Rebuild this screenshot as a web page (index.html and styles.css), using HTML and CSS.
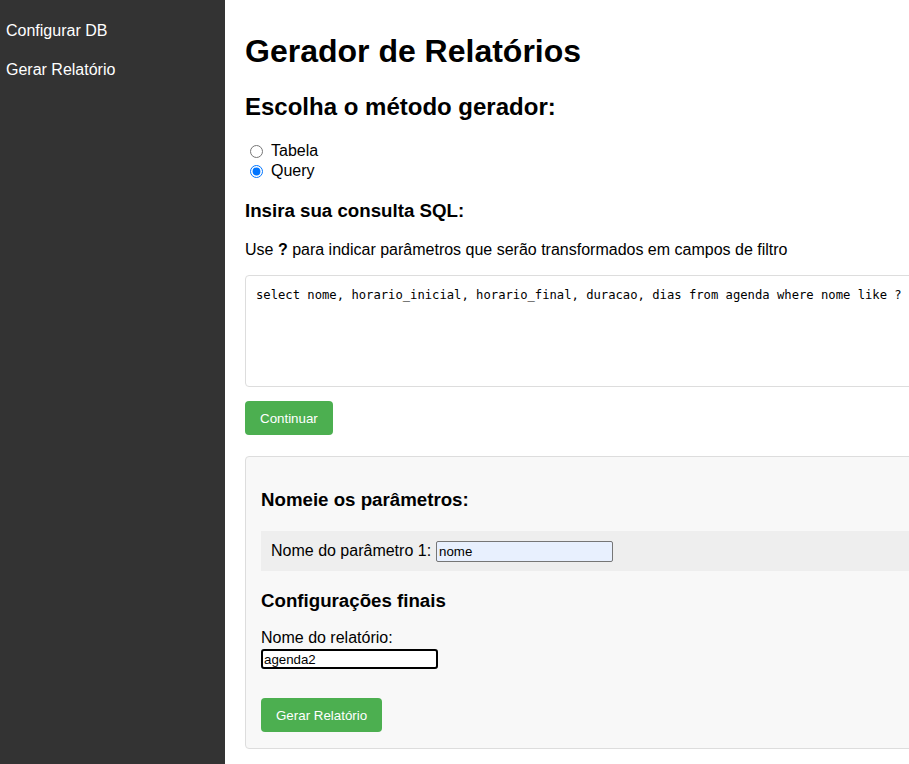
FILE: index.html
```html
<!DOCTYPE html>
<html lang="pt">
<head>
<meta charset="utf-8">
<title>Gerador de Relatórios</title>
<link rel="stylesheet" href="styles.css">
</head>
<body>
<div class="layout">
  <nav class="sidebar">
    <a class="nav-link" href="#">Configurar DB</a>
    <a class="nav-link" href="#">Gerar Relatório</a>
  </nav>
  <main class="main">
    <h1 class="title">Gerador de Relatórios</h1>
    <h2 class="subtitle">Escolha o método gerador:</h2>
    <div class="radios">
      <label class="radio"><input type="radio" name="m"> Tabela</label>
      <label class="radio"><input type="radio" name="m" checked> Query</label>
    </div>
    <h3 class="section">Insira sua consulta SQL:</h3>
    <p class="hint">Use <b>?</b> para indicar parâmetros que serão transformados em campos de filtro</p>
    <textarea class="sql">select nome, horario_inicial, horario_final, duracao, dias from agenda where nome like ?</textarea>
    <button class="btn">Continuar</button>
    <section class="panel">
      <h3 class="section panel-title">Nomeie os parâmetros:</h3>
      <div class="param-row">
        <label>Nome do parâmetro 1:</label>
        <input class="param-input" type="text" value="nome">
      </div>
      <h3 class="section final-title">Configurações finais</h3>
      <label class="field-label">Nome do relatório:</label>
      <input class="report-input" type="text" value="agenda2">
      <button class="btn btn-gen">Gerar Relatório</button>
    </section>
  </main>
</div>
</body>
</html>
```
FILE: styles.css
```css
html, body {
  margin: 0;
  padding: 0;
  overflow: hidden;
  background: #fff;
  font-family: "Liberation Sans", Arial, sans-serif;
  color: #000;
}
.layout {
  display: flex;
  min-height: 764px;
}
.sidebar {
  width: 225px;
  flex: 0 0 225px;
  background: #333;
  display: flex;
  flex-direction: column;
  padding-top: 21px;
  box-sizing: border-box;
}
.nav-link {
  color: #fff;
  text-decoration: none;
  font-size: 16px;
  line-height: 18px;
  padding: 1px 6px;
  margin-bottom: 19px;
}
.main {
  flex: 0 0 auto;
  width: 720px;
  padding: 20px;
  box-sizing: border-box;
}
.title {
  font-size: 32px;
  margin: 13px 0 23px;
  line-height: 37px;
}
.subtitle {
  font-size: 24px;
  margin: 0 0 20px;
  line-height: 28px;
}
.radios {
  display: flex;
  flex-direction: column;
  font-size: 16px;
}
.radio {
  display: flex;
  align-items: center;
  height: 20px;
}
.radio input {
  margin: 0 8px 0 5px;
  width: 13px;
  height: 13px;
}
.section {
  font-size: 18.7px;
  margin: 19px 0 0;
  line-height: 22px;
}
.hint {
  font-size: 16px;
  margin: 19px 0 16px;
  line-height: 18px;
}
.sql {
  display: block;
  width: 680px;
  height: 112px;
  box-sizing: border-box;
  border: 1px solid #ddd;
  border-radius: 4px;
  padding: 12px 10px 10px;
  font-family: "DejaVu Sans Mono", "Liberation Mono", monospace;
  font-size: 12.2px;
  resize: none;
  margin: 0 0 14px;
}
.btn {
  display: block;
  background: #4CAF50;
  color: #fff;
  border: none;
  border-radius: 4px;
  font-family: "Liberation Sans", Arial, sans-serif;
  font-size: 13.33px;
  height: 34px;
  padding: 0 15px;
}
.panel {
  margin-top: 21px;
  background: #f8f8f8;
  border: 1px solid #ddd;
  border-radius: 4px;
  padding: 15px 15px 16px;
  width: 690px;
  box-sizing: border-box;
}
.panel-title {
  margin: 17px 0 0;
}
.param-row {
  margin-top: 20px;
  background: #eee;
  height: 40px;
  padding: 0 10px;
  display: flex;
  align-items: center;
  font-size: 16px;
}
.param-row label {
  margin-right: 5px;
}
.param-input {
  width: 177px;
  height: 21px;
  box-sizing: border-box;
  border: 1px solid #767676;
  border-radius: 2px;
  background: #e8f0fe;
  font-family: "Liberation Sans", Arial, sans-serif;
  font-size: 13.3px;
  padding: 1px 2px;
}
.final-title {
  margin: 19px 0 0;
}
.field-label {
  display: block;
  font-size: 16px;
  margin-top: 17px;
  margin-bottom: 2px;
  line-height: 18px;
}
.report-input {
  display: block;
  width: 177px;
  height: 20px;
  box-sizing: border-box;
  border: 2px solid #000;
  border-radius: 3px;
  font-family: "Liberation Sans", Arial, sans-serif;
  font-size: 13.3px;
  padding: 0 1px;
  outline: none;
}
.btn-gen {
  margin-top: 29px;
}
```
